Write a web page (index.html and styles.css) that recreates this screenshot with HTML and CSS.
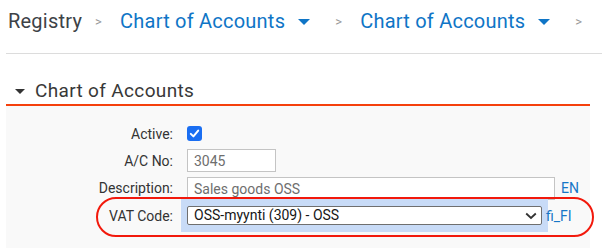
FILE: index.html
```html
<!DOCTYPE html>
<html lang="en">

<head>
    <meta charset="UTF-8">
    <meta name="viewport" content="width=device-width, initial-scale=1.0">
    <title>Chart of Accounts</title>
    <link rel="stylesheet" href="styles.css">
</head>

<body>
    <div class="breadcrumb">
        <span class="crumb">Registry</span>
        <span class="sep">&gt;</span>
        <a href="#" class="crumb link">Chart of Accounts</a>
        <span class="caret"></span>
        <span class="sep">&gt;</span>
        <a href="#" class="crumb link">Chart of Accounts</a>
        <span class="caret"></span>
        <span class="sep">&gt;</span>
    </div>
    <div class="rule"></div>

    <div class="section">
        <div class="section-head"><span class="toggle"></span>Chart of Accounts</div>
        <div class="panel">
            <div class="form-row row-active">
                <label class="label">Active:</label>
                <div class="field">
                    <span class="checkbox">
                        <svg width="15" height="15" viewBox="0 0 15 15">
                            <rect width="15" height="15" rx="3" fill="#1a6ef2" />
                            <path d="M3.8 7.9 L6.4 10.4 L11.2 4.6" fill="none" stroke="#fff" stroke-width="2" stroke-linecap="round" stroke-linejoin="round" />
                        </svg>
                    </span>
                </div>
            </div>
            <div class="form-row row-acno">
                <label class="label">A/C No:</label>
                <div class="field"><input type="text" class="input input-short" value="3045"></div>
            </div>
            <div class="form-row row-desc">
                <label class="label">Description:</label>
                <div class="field"><input type="text" class="input input-long" value="Sales goods OSS"></div>
                <a href="#" class="lang">EN</a>
            </div>
            <div class="form-row row-vat">
                <label class="label">VAT Code:</label>
                <div class="field highlight">
                    <div class="select-wrap">
                        <select class="select">
                            <option>OSS-myynti (309) - OSS</option>
                        </select>
                        <svg class="chevron" width="12" height="8" viewBox="0 0 12 8">
                            <path d="M1.2 1.5 L6 6 L10.8 1.5" fill="none" stroke="#333" stroke-width="1.8" />
                        </svg>
                    </div>
                </div>
                <a href="#" class="lang lang-fi">fi_FI</a>
                <!-- annotation ring around the vat row -->
                <div class="ring"></div>
            </div>
        </div>
    </div>
</body>

</html>
```

FILE: styles.css
```css
body {
    margin: 0;
    font-family: Roboto, "Liberation Sans", sans-serif;
    background-color: #fff;
    color: #333;
    overflow: hidden;
}

.breadcrumb {
    display: flex;
    align-items: center;
    padding: 9px 0 20px 8px;
    height: 24px;
    font-size: 20px;
    line-height: 24px;
    letter-spacing: 0.22px;
    white-space: nowrap;
}

.crumb {
    color: #3d4247;
    text-decoration: none;
}

.crumb.link {
    color: #0f75c6;
}

.sep {
    font-size: 13px;
    color: #999;
    margin: 1px 18px 0 13px;
}

.caret {
    width: 0;
    height: 0;
    margin: 2px 12px 0 13px;
    border-left: 6px solid transparent;
    border-right: 6px solid transparent;
    border-top: 6px solid #0f75c6;
}

.rule {
    margin-left: 6px;
    height: 1px;
    background-color: #dcdcdc;
}

.section {
    margin: 26px 12px 0 6px;
}

.section-head {
    display: flex;
    align-items: center;
    height: 22px;
    padding: 0 0 2px 9px;
    font-size: 19px;
    line-height: 22px;
    letter-spacing: 0.35px;
    color: #383838;
    border-bottom: 2px solid #f5400c;
}

.toggle {
    width: 0;
    height: 0;
    margin: 1px 10px 0 0;
    border-left: 5px solid transparent;
    border-right: 5px solid transparent;
    border-top: 5px solid #333;
}

.panel {
    background-color: #f9f9f9;
    padding-top: 16px;
    height: 126px;
}

.form-row {
    display: flex;
    align-items: center;
    font-size: 14px;
}

.label {
    width: 167px;
    padding-right: 8px;
    text-align: right;
    color: #333;
}

.field {
    display: flex;
    align-items: center;
    padding: 0 6px;
}

.row-active {
    height: 23px;
}

.checkbox {
    display: block;
    width: 15px;
    height: 15px;
}

.checkbox svg {
    display: block;
}

.row-acno {
    height: 23px;
    margin-top: 4px;
}

.row-desc {
    height: 22px;
    margin-top: 5px;
}

.input {
    box-sizing: border-box;
    height: 23px;
    margin: 0;
    padding: 0 6px;
    border: 1px solid #c4c4c4;
    background-color: #fff;
    font-family: Roboto, "Liberation Sans", sans-serif;
    font-size: 14px;
    color: #6e6e6e;
    outline: none;
}

.input-short {
    width: 89px;
}

.input-long {
    width: 368px;
    height: 23px;
    margin-top: 1px;
}

.lang {
    color: #1676c7;
    text-decoration: none;
    font-size: 14px;
}

.row-vat {
    position: relative;
    height: 33px;
}

.highlight {
    height: 33px;
    background-color: #c8dbf7;
}

.select-wrap {
    position: relative;
}

.select {
    -webkit-appearance: none;
    appearance: none;
    display: block;
    box-sizing: border-box;
    width: 355px;
    height: 19px;
    margin: 0;
    padding: 0 0 0 6px;
    border: 1px solid #6f6f6f;
    border-radius: 2px;
    background-color: #fff;
    font-family: Roboto, "Liberation Sans", sans-serif;
    font-size: 14px;
    line-height: 17px;
    color: #161616;
}

.chevron {
    position: absolute;
    right: 5px;
    top: 6px;
    pointer-events: none;
}

.lang-fi {
    margin-left: -2px;
}

.ring {
    position: absolute;
    left: 90px;
    top: -2px;
    width: 498px;
    height: 40px;
    box-sizing: border-box;
    border: 2px solid #f2190c;
    border-radius: 20px;
    pointer-events: none;
}
```
